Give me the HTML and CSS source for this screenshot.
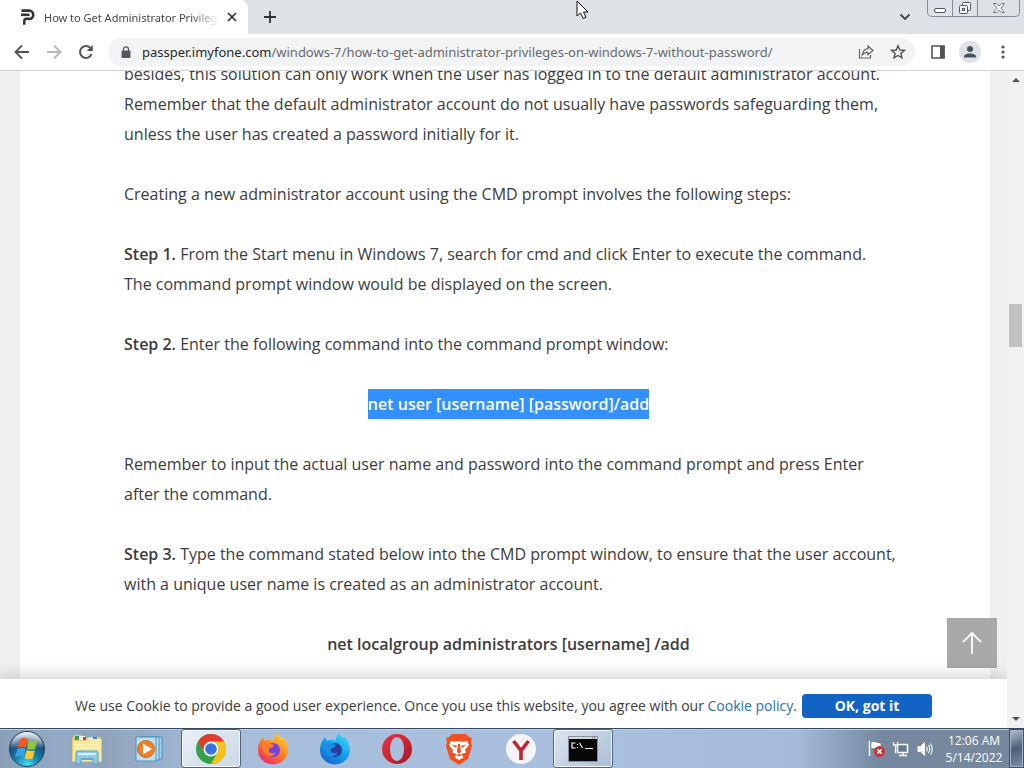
FILE: index.html
```html
<!DOCTYPE html>
<html lang="en">
<head>
<meta charset="utf-8">
<title>How to Get Administrator Privileges</title>
<link rel="stylesheet" href="styles.css">
</head>
<body>
<header class="tabstrip">
  <div class="tab">
    <svg class="favicon" width="16" height="18" viewBox="0 0 16 18" fill="none" stroke="#333538" stroke-width="2.6"><path d="M1.500 2.600h7.600a4.200 4.200 0 0 1 0 8.400H8"/><path d="M1 6.800h8.500"/><path d="M4.300 16.800V13q0-2.300 2.300-2.300h2"/></svg>
    <span class="tab-title">How to Get Administrator Privileges</span>
    <button class="icon-btn tab-close" aria-label="Close tab"><svg width="10" height="10" viewBox="0 0 10 10" stroke="#303236" stroke-width="1.7"><path d="M1 1l8 8M9 1l-8 8"/></svg></button>
  </div>
  <button class="icon-btn new-tab" aria-label="New tab"><svg width="12" height="12" viewBox="0 0 12 12" stroke="#303236" stroke-width="1.8"><path d="M6 0v12M0 6h12"/></svg></button>
  <button class="icon-btn tab-search" aria-label="Search tabs"><svg width="12" height="8" viewBox="0 0 12 8" fill="none" stroke="#44474b" stroke-width="1.9"><path d="M1.5 1.5L6 6l4.500-4.500"/></svg></button>
  <div class="window-controls">
    <button class="win-btn" aria-label="Minimize"><svg width="14" height="14" viewBox="0 0 14 14" fill="#fff" stroke="#555b64"><rect x="1.500" y="7.500" width="11" height="4" rx="1.500"/></svg></button>
    <button class="win-btn" aria-label="Restore"><svg width="14" height="14" viewBox="0 0 14 14" fill="#f4f6f8" stroke="#555b64"><rect x="4.500" y="1.500" width="8" height="8" rx="1"/><rect x="1.500" y="4.500" width="8" height="8" rx="1"/><rect x="4.500" y="7.500" width="2" height="2"/></svg></button>
    <button class="win-btn win-close" aria-label="Close"><svg width="14" height="14" viewBox="0 0 14 14" fill="#fff" stroke="#666c74" stroke-width=".9"><path d="M1.500 2.500h3L7 5l2.500-2.500h3L9 7.200l3.500 4.300h-3L7 9.200l-2.500 2.300h-3L5 7.200z"/></svg></button>
  </div>
</header>
<nav class="toolbar" aria-label="Browser">
  <button class="icon-btn nav-btn" aria-label="Back"><svg width="16" height="16" viewBox="0 0 16 16" fill="none" stroke="#505357" stroke-width="1.9"><path d="M15 8H2M8 1.500L1.500 8 8 14.500"/></svg></button>
  <button class="icon-btn nav-btn" aria-label="Forward"><svg width="16" height="16" viewBox="0 0 16 16" fill="none" stroke="#b5b7ba" stroke-width="1.900"><path d="M1 8h13M8 1.500L14.500 8 8 14.500"/></svg></button>
  <button class="icon-btn nav-btn" aria-label="Reload"><svg width="16" height="16" viewBox="0 0 16 16" fill="none" stroke="#505357" stroke-width="2"><path d="M13.600 10.200A6 6 0 1 1 12.500 4"/><path d="M14.800 1v6h-6z" fill="#505357" stroke="none"/></svg></button>
  <div class="address">
    <svg class="lock" width="10" height="12" viewBox="0 0 10 12"><rect x="0.500" y="4.500" width="9" height="7.500" rx="1" fill="#55585c"/><path d="M2.500 5V3.300a2.500 2.500 0 0 1 5 0V5" fill="none" stroke="#55585c" stroke-width="1.300"/></svg>
    <a class="url" href="#"><span class="host">passper.imyfone.com</span>/windows-7/how-to-get-administrator-privileges-on-windows-7-without-password/</a>
    <button class="icon-btn share" aria-label="Share"><svg width="16" height="16" viewBox="0 0 16 16" fill="none" stroke="#606367" stroke-width="1.200"><path d="M1.500 5v9h11v-3"/><path d="M10 2l5 4.500-5 4.300V8.300C7.500 8.300 5.800 9 4.300 11c.4-3.500 2.500-6 5.700-6.400z"/></svg></button>
    <button class="icon-btn star" aria-label="Bookmark"><svg width="16" height="16" viewBox="0 0 16 16" fill="none" stroke="#505357" stroke-width="1.400"><path d="M8 1.800l1.800 4.200 4.600.4-3.500 3 1.100 4.500L8 11.500l-4 2.400 1.100-4.500-3.500-3 4.600-.4z"/></svg></button>
  </div>
  <button class="icon-btn panel" aria-label="Side panel"><svg width="14" height="14" viewBox="0 0 14 14"><path d="M1 1h12v12H1z" fill="#fff" stroke="#505357" stroke-width="1.600"/><path d="M9 1h4.500v12H9z" fill="#505357"/></svg></button>
  <button class="icon-btn profile" aria-label="Profile"><svg width="22" height="22" viewBox="0 0 22 22"><circle cx="11" cy="11" r="11" fill="#dee1e6"/><circle cx="11" cy="8" r="3" fill="#47525d"/><path d="M5 16.500v-1c0-4 12-4 12 0v1z" fill="#47525d"/></svg></button>
  <button class="icon-btn more" aria-label="More"><svg width="4" height="14" viewBox="0 0 4 14" fill="#505357"><circle cx="2" cy="2" r="1.600"/><circle cx="2" cy="7" r="1.600"/><circle cx="2" cy="12" r="1.600"/></svg></button>
</nav>
<div class="viewport">
  <main class="page">
    <article class="article">
      <p>besides, this solution can only work when the user has logged in to the default administrator account.<br>Remember that the default administrator account do not usually have passwords safeguarding them,<br>unless the user has created a password initially for it.</p>
      <p>Creating a new administrator account using the CMD prompt involves the following steps:</p>
      <p><b>Step 1.</b> From the Start menu in Windows 7, search for cmd and click Enter to execute the command.<br>The command prompt window would be displayed on the screen.</p>
      <p><b>Step 2.</b> Enter the following command into the command prompt window:</p>
      <p class="command"><mark>net user [username] [password]/add</mark></p>
      <p>Remember to input the actual user name and password into the command prompt and press Enter<br>after the command.</p>
      <p><b>Step 3.</b> Type the command stated below into the CMD prompt window, to ensure that the user account,<br>with a unique user name is created as an administrator account.</p>
      <p class="command">net localgroup administrators [username] /add</p>
    </article>
    <button class="to-top" aria-label="Back to top"><svg width="22" height="24" viewBox="0 0 22 24" fill="none" stroke="#fff" stroke-width="1.800"><path d="M11 23V2M2 11l9-9 9 9"/></svg></button>
    <div class="cookie">
      <span>We use Cookie to provide a good user experience. Once you use this website, you agree with our <a href="#">Cookie policy</a>.</span>
      <button class="accept">OK, got it</button>
    </div>
  </main>
  <div class="scrollbar">
    <svg width="8" height="4" viewBox="0 0 8 4"><path d="M0 4l4-4 4 4z" fill="#505050"/></svg>
    <div class="track"><div class="thumb"></div></div>
    <svg width="8" height="4" viewBox="0 0 8 4"><path d="M0 0h8L4 4z" fill="#505050"/></svg>
  </div>
</div>
<footer class="taskbar">
  <button class="task start" aria-label="Start"><svg width="38" height="38" viewBox="0 0 38 38">
    <defs><radialGradient id="orb" cx=".5" cy=".95" r=".9"><stop offset="0" stop-color="#3fe0f5"/><stop offset=".4" stop-color="#167fae"/><stop offset=".75" stop-color="#1c4a78"/><stop offset="1" stop-color="#9db9cf"/></radialGradient><linearGradient id="gloss" x2="0" y2="1"><stop offset="0" stop-color="#fff" stop-opacity=".75"/><stop offset="1" stop-color="#fff" stop-opacity=".1"/></linearGradient></defs>
    <circle cx="19" cy="19" r="17.500" fill="url(#orb)" stroke="#263f5e"/><path d="M3 18a16 16 0 0 1 32 0q-16-5-32 0z" fill="url(#gloss)"/>
    <path d="M12 9q4-2.500 8 0l-2 8.800q-4-2.200-8.500 0z" fill="#ee5a24"/><path d="M21 9.800q4 2.300 8.500.3l-2.300 8.600q-4 2-8.200 0z" fill="#8cc63f"/><path d="M9.300 18.900q4.300-2.200 8.500 0l-2.200 8.300q-4-2.200-8.500 0z" fill="#38a0e0"/><path d="M18.800 20q4.200 2 8.200.2l-2.300 8.300q-4.200 1.800-8.200-.4z" fill="#fdc82f"/></svg></button>
  <button class="task" aria-label="Explorer"><svg width="32" height="32" viewBox="0 0 32 32"><path d="M2 4q0-2 2-2h6l1 2h18l2 3v22H1V6z" fill="#e8cb6a"/><path d="M4 3h6v4H4z" fill="#31a04a"/><path d="M8 3h6v4H8zM17 5h9v3h-9z" fill="#fff"/><path d="M12 4h3v3h-3z" fill="#d83b2b"/><path d="M22 4h4v2h-4z" fill="#3a8bc8"/><path d="M2 8h13l2-2h13v22H2z" fill="#f6e9a0"/><path d="M4 12h25M4 15h25" stroke="#fff6c6"/><path d="M5 31V20q0-2 2-2h18q2 0 2 2v11h-5v-5H10v5z" fill="#8dcaeb" stroke="#5b9fc4"/><path d="M7 21h18" stroke="#d8f2ff" stroke-width="2"/><path d="M10 26h12" stroke="#3f94c0"/></svg></button>
  <button class="task" aria-label="Media Player"><svg width="28" height="28" viewBox="0 0 28 28"><path d="M7 2h20v22H7z" fill="#a6d1ec" stroke="#4a90be"/><path d="M4 2h20v23H4z" fill="#b9dff4" stroke="#4a90be"/><path d="M1 2h20v24H1z" fill="#bfe0f4" stroke="#4a90be"/><circle cx="11" cy="14" r="8.500" fill="#f08025" stroke="#d46a1c"/><path d="M8 8.500l9 5.500-9 5.500z" fill="#fff"/></svg></button>
  <button class="task active" aria-label="Chrome"><svg width="32" height="32" viewBox="0 0 32 32"><circle cx="16" cy="16" r="15" fill="#34a047"/><path d="M3 8.500A15 15 0 0 1 29 8.500H16a7.500 7.500 0 0 0-6.500 11.250z" fill="#e33b2e"/><path d="M29 8.500A15 15 0 0 1 16 31l6.500-11.250A7.500 7.500 0 0 0 16 8.500z" fill="#fbc116"/><circle cx="16" cy="16" r="7.500" fill="#fff"/><circle cx="16" cy="16" r="5.800" fill="#3474e0"/></svg></button>
  <button class="task" aria-label="Firefox"><svg width="32" height="32" viewBox="0 0 32 32"><defs><linearGradient id="fx" x1=".9" y1="0" x2=".2" y2="1"><stop offset="0" stop-color="#ffe03a"/><stop offset=".45" stop-color="#ff8a22"/><stop offset="1" stop-color="#f0246a"/></linearGradient></defs><path d="M4 7l2-3 2 4q3-2 6-1l3 1q-1-4 3-8 1 3 5 5l1-1q5 6 5 13a15 14.500 0 0 1-30 0Q1 11 4 7z" fill="url(#fx)"/><circle cx="16" cy="17" r="7" fill="#7542d5"/><path d="M5 11q5-3 8 0 3 0 4 1-1 3-4 3-3 3 1 5 3 1 5-1-2 5-8 4-6-2-6-12z" fill="#ff7a29"/></svg></button>
  <button class="task" aria-label="Firefox Developer"><svg width="32" height="32" viewBox="0 0 32 32"><defs><linearGradient id="fd" x1=".9" y1="0" x2=".2" y2="1"><stop offset="0" stop-color="#42dcf7"/><stop offset=".5" stop-color="#12a3ee"/><stop offset="1" stop-color="#1261d0"/></linearGradient></defs><path d="M4 7l2-3 2 4q3-2 6-1l3 1q-1-4 3-8 1 3 5 5l1-1q5 6 5 13a15 14.500 0 0 1-30 0Q1 11 4 7z" fill="url(#fd)"/><circle cx="16" cy="17" r="7" fill="#233e9b"/><path d="M5 11q5-3 8 0 3 0 4 1-1 3-4 3-3 3 1 5 3 1 5-1-2 5-8 4-6-2-6-12z" fill="#188ce0"/></svg></button>
  <button class="task" aria-label="Opera"><svg width="32" height="32" viewBox="0 0 32 32"><defs><linearGradient id="op" x2="1" y2="1"><stop offset="0" stop-color="#ec3540"/><stop offset="1" stop-color="#a91520"/></linearGradient></defs><path fill-rule="evenodd" d="M16 1a15 15 0 1 0 0 30 15 15 0 0 0 0-30zM16 4c4 0 7 5 7 12s-3 12-7 12-7-5-7-12 3-12 7-12z" fill="url(#op)"/></svg></button>
  <button class="task" aria-label="Brave"><svg width="30" height="32" viewBox="0 0 30 32"><path d="M8 1h14l3 3 3 1-1 4 1 4-4 13-9 6-9-6L2 13l1-4-1-4 3-1z" fill="#f2501e"/><path d="M7 8l4 .8L15 8l4 .8L23 8l2 4-4 5 1 2.500-4.500 1.500 2 3.500L15 27l-4.500-2.500 2-3.500L8 19.500 9 17l-4-5z" fill="#fff"/><path d="M7.500 11.500l5.500 1.300-1 2.200zM22.500 11.500L17 12.800l1 2.200zM14 11h2l1 8-2 1.500-2-1.500zM12 22l3-1 3 1-3 1.500z" fill="#f2501e"/></svg></button>
  <button class="task" aria-label="Yandex"><svg width="32" height="32" viewBox="0 0 32 32"><circle cx="16" cy="16" r="15" fill="#f5f5f7"/><path d="M8.500 8l7.500 9.500L23.500 8M16 17v10" fill="none" stroke="#c3242c" stroke-width="3.600"/></svg></button>
  <button class="task active cmd" aria-label="Command Prompt"><svg width="30" height="26" viewBox="0 0 30 26"><path d="M.5.5h29v25H.5z" fill="#080808" stroke="#8b9199"/><path d="M1 1h28v2H1z" fill="#d4d8dc"/><path d="M24 2h4" stroke="#555" stroke-dasharray="1 1"/><path d="M7.500 7H4v5h3.500M9.500 8v1M9.500 11v1M11.500 7l3 5M17 12.500h8" stroke="#fff" fill="none" stroke-width="1.200"/></svg></button>
  <div class="tray">
    <svg width="18" height="18" viewBox="0 0 18 18"><path d="M1.500 1v15" stroke="#fff" stroke-width="1.500"/><path d="M3 2q3-1 5 0t5 1v7q-3 0-5-1t-5 0z" fill="#fff" stroke="#59697c" stroke-width=".6"/><circle cx="11.500" cy="11.500" r="5.500" fill="#cf3434"/><path d="M9.500 9.500l4 4M13.500 9.500l-4 4" stroke="#fff" stroke-width="1.700"/></svg>
    <svg width="18" height="18" viewBox="0 0 18 18" fill="none"><path d="M5.500 4.500h10v8h-10z" fill="#68798f" stroke="#fff" stroke-width="1.500"/><path d="M7 15.500h8M11 13v2" stroke="#fff" stroke-width="1.500"/><path d="M1.500 2v3h4V2M3.500 5v8" stroke="#fff" stroke-width="1.300"/></svg>
    <svg width="18" height="18" viewBox="0 0 18 18" fill="none" stroke="#fff"><path d="M2 6.500h2.500l4-4v13l-4-4H2z" fill="#fff"/><path d="M10.500 6.500q1.500 2.500 0 5M12.500 5q2.500 4 0 8M14.500 3.500q3.500 5.500 0 11" stroke-width="1.100"/></svg>
  </div>
  <div class="clock"><span>12:06 AM</span><span>5/14/2022</span></div>
  <button class="show-desktop" aria-label="Show desktop"></button>
</footer>
<svg class="cursor" width="14" height="20" viewBox="0 0 14 20"><path d="M1 1v15l3.500-3 2.700 5.500 2.800-1.300L7.500 12H12z" fill="#fff" stroke="#111"/></svg>
</body>
</html>
```
FILE: styles.css
```css
* { box-sizing: border-box; }
body {
  margin: 0;
  height: 100vh;
  display: flex;
  flex-direction: column;
  overflow: hidden;
  font-family: "Open Sans", sans-serif;
  color: #3c3c3c;
}
button { padding: 0; border: 0; background: none; font: inherit; }
svg { display: block; flex: none; }
.icon-btn { display: flex; align-items: center; justify-content: center; flex: none; }

.tabstrip { display: flex; height: 34px; flex: none; background: #dee1e6; }
.tab {
  display: flex;
  align-items: center;
  width: 248px;
  padding: 0 11px 0 20px;
  background: #fff;
  border-radius: 0 8px 0 0;
}
.tab-title {
  flex: 1;
  margin-left: 8px;
  overflow: hidden;
  white-space: nowrap;
  font-family: "Noto Sans", sans-serif;
  font-size: 11px;
  color: #45484c;
  mask-image: linear-gradient(to right, #000 84%, transparent);
}
.tab-close { margin-left: 8px; }
.new-tab { width: 44px; }
.tab-search { width: 20px; margin-left: auto; }
.window-controls {
  display: flex;
  height: 17px;
  margin: 0 4px 0 12px;
  border: 1px solid #858b94;
  border-top: 0;
  border-radius: 0 0 5px 5px;
}
.win-btn { display: flex; justify-content: center; align-items: center; width: 25px; border-right: 1px solid #858b94; }
.win-close { width: 41px; border-right: 0; }

.toolbar {
  display: flex;
  align-items: center;
  height: 37px;
  flex: none;
  padding: 0 13px 0 6px;
  background: #fff;
  border-bottom: 1px solid #cfd1d3;
}
.nav-btn { width: 32px; height: 32px; }
.address {
  display: flex;
  align-items: center;
  flex: 1;
  min-width: 0;
  height: 28px;
  margin-left: 6px;
  padding: 0 9px 0 13px;
  border-radius: 14px;
  background: #f1f3f4;
}
.url {
  flex: 1;
  margin-left: 11px;
  overflow: hidden;
  white-space: nowrap;
  font-family: "Noto Sans", sans-serif;
  font-size: 13px;
  color: #666a6e;
  text-decoration: none;
}
.host { color: #26282b; }
.star { margin-left: 16px; }
.panel { margin-left: 16px; }
.profile { margin-left: 14px; }
.more { width: 16px; margin-left: 14px; }

.viewport { display: flex; flex: 1; min-height: 0; }
.page { position: relative; flex: 1; overflow: hidden; padding: 0 17px 0 20px; background: #f0f0f0; }
.article {
  min-height: 110%;
  margin-top: -12px;
  padding: 0 97px 0 104px;
  background: #fff;
  font-size: 16px;
  line-height: 30px;
}
.article p { margin: 0 0 30px; white-space: nowrap; }
.article b { font-weight: 600; }
.article .command { text-align: center; font-weight: 600; }
mark { display: inline-block; background: #3390ff; color: #fff; }
.to-top {
  position: absolute;
  right: 10px;
  bottom: 60px;
  display: flex;
  align-items: center;
  justify-content: center;
  width: 50px;
  height: 50px;
  background: #a9a9a9;
}
.cookie {
  position: absolute;
  left: 0;
  right: 0;
  bottom: 0;
  display: flex;
  align-items: center;
  justify-content: center;
  gap: 5px;
  height: 49px;
  padding-top: 4px;
  background: #fff;
  box-shadow: 0 0 20px rgba(0, 0, 0, .25);
  font-size: 14px;
}
.cookie a { color: #2a6fb5; text-decoration: none; }
.accept { width: 130px; height: 24px; border-radius: 4px; background: #1164c4; color: #fff; font-weight: 700; }

.scrollbar {
  display: flex;
  flex-direction: column;
  align-items: center;
  width: 17px;
  padding: 7px 0;
  background: #f1f1f1;
}
.track { flex: 1; width: 13px; }
.thumb { height: 43px; margin-top: 222px; background: #c1c1c1; }

.taskbar {
  display: flex;
  align-items: center;
  height: 40px;
  flex: none;
  border-top: 1px solid #34485f;
  background: linear-gradient(to right, #8b9fb8 0, #93a9c5 6%, #8fa3bb 10%, #a6bddb 22%, #a9c1de 60%, #a3bbd8 78%, #7588a0 86%, #77889d 100%);
  box-shadow: inset 0 1px #c2d2e3;
}
.task { display: flex; align-items: center; justify-content: center; width: 60px; height: 39px; margin-right: 2px; flex: none; }
.start { width: 54px; margin-right: 3px; }
.active {
  border: 1px solid #51657d;
  border-radius: 3px;
  background: linear-gradient(135deg, #e9eff5, #cbd8e6);
  box-shadow: inset 0 0 0 1px #f2f6fa;
}
.cmd { background: linear-gradient(135deg, #dce6f0, #aabed6); }
.tray { display: flex; gap: 6px; margin-left: auto; }
.clock {
  display: flex;
  flex-direction: column;
  width: 60px;
  margin: 0 5px 0 10px;
  text-align: center;
  font-size: 12px;
  line-height: 17px;
  color: #fff;
}
.show-desktop {
  width: 15px;
  height: 39px;
  border: 1px solid #3f4f63;
  background: linear-gradient(160deg, #b4c0cd, #4d5f77 50%, #7d8fa5);
  box-shadow: inset 0 0 0 1px #a5b3c4;
}
.cursor { position: absolute; left: 576px; top: 0; }
```
